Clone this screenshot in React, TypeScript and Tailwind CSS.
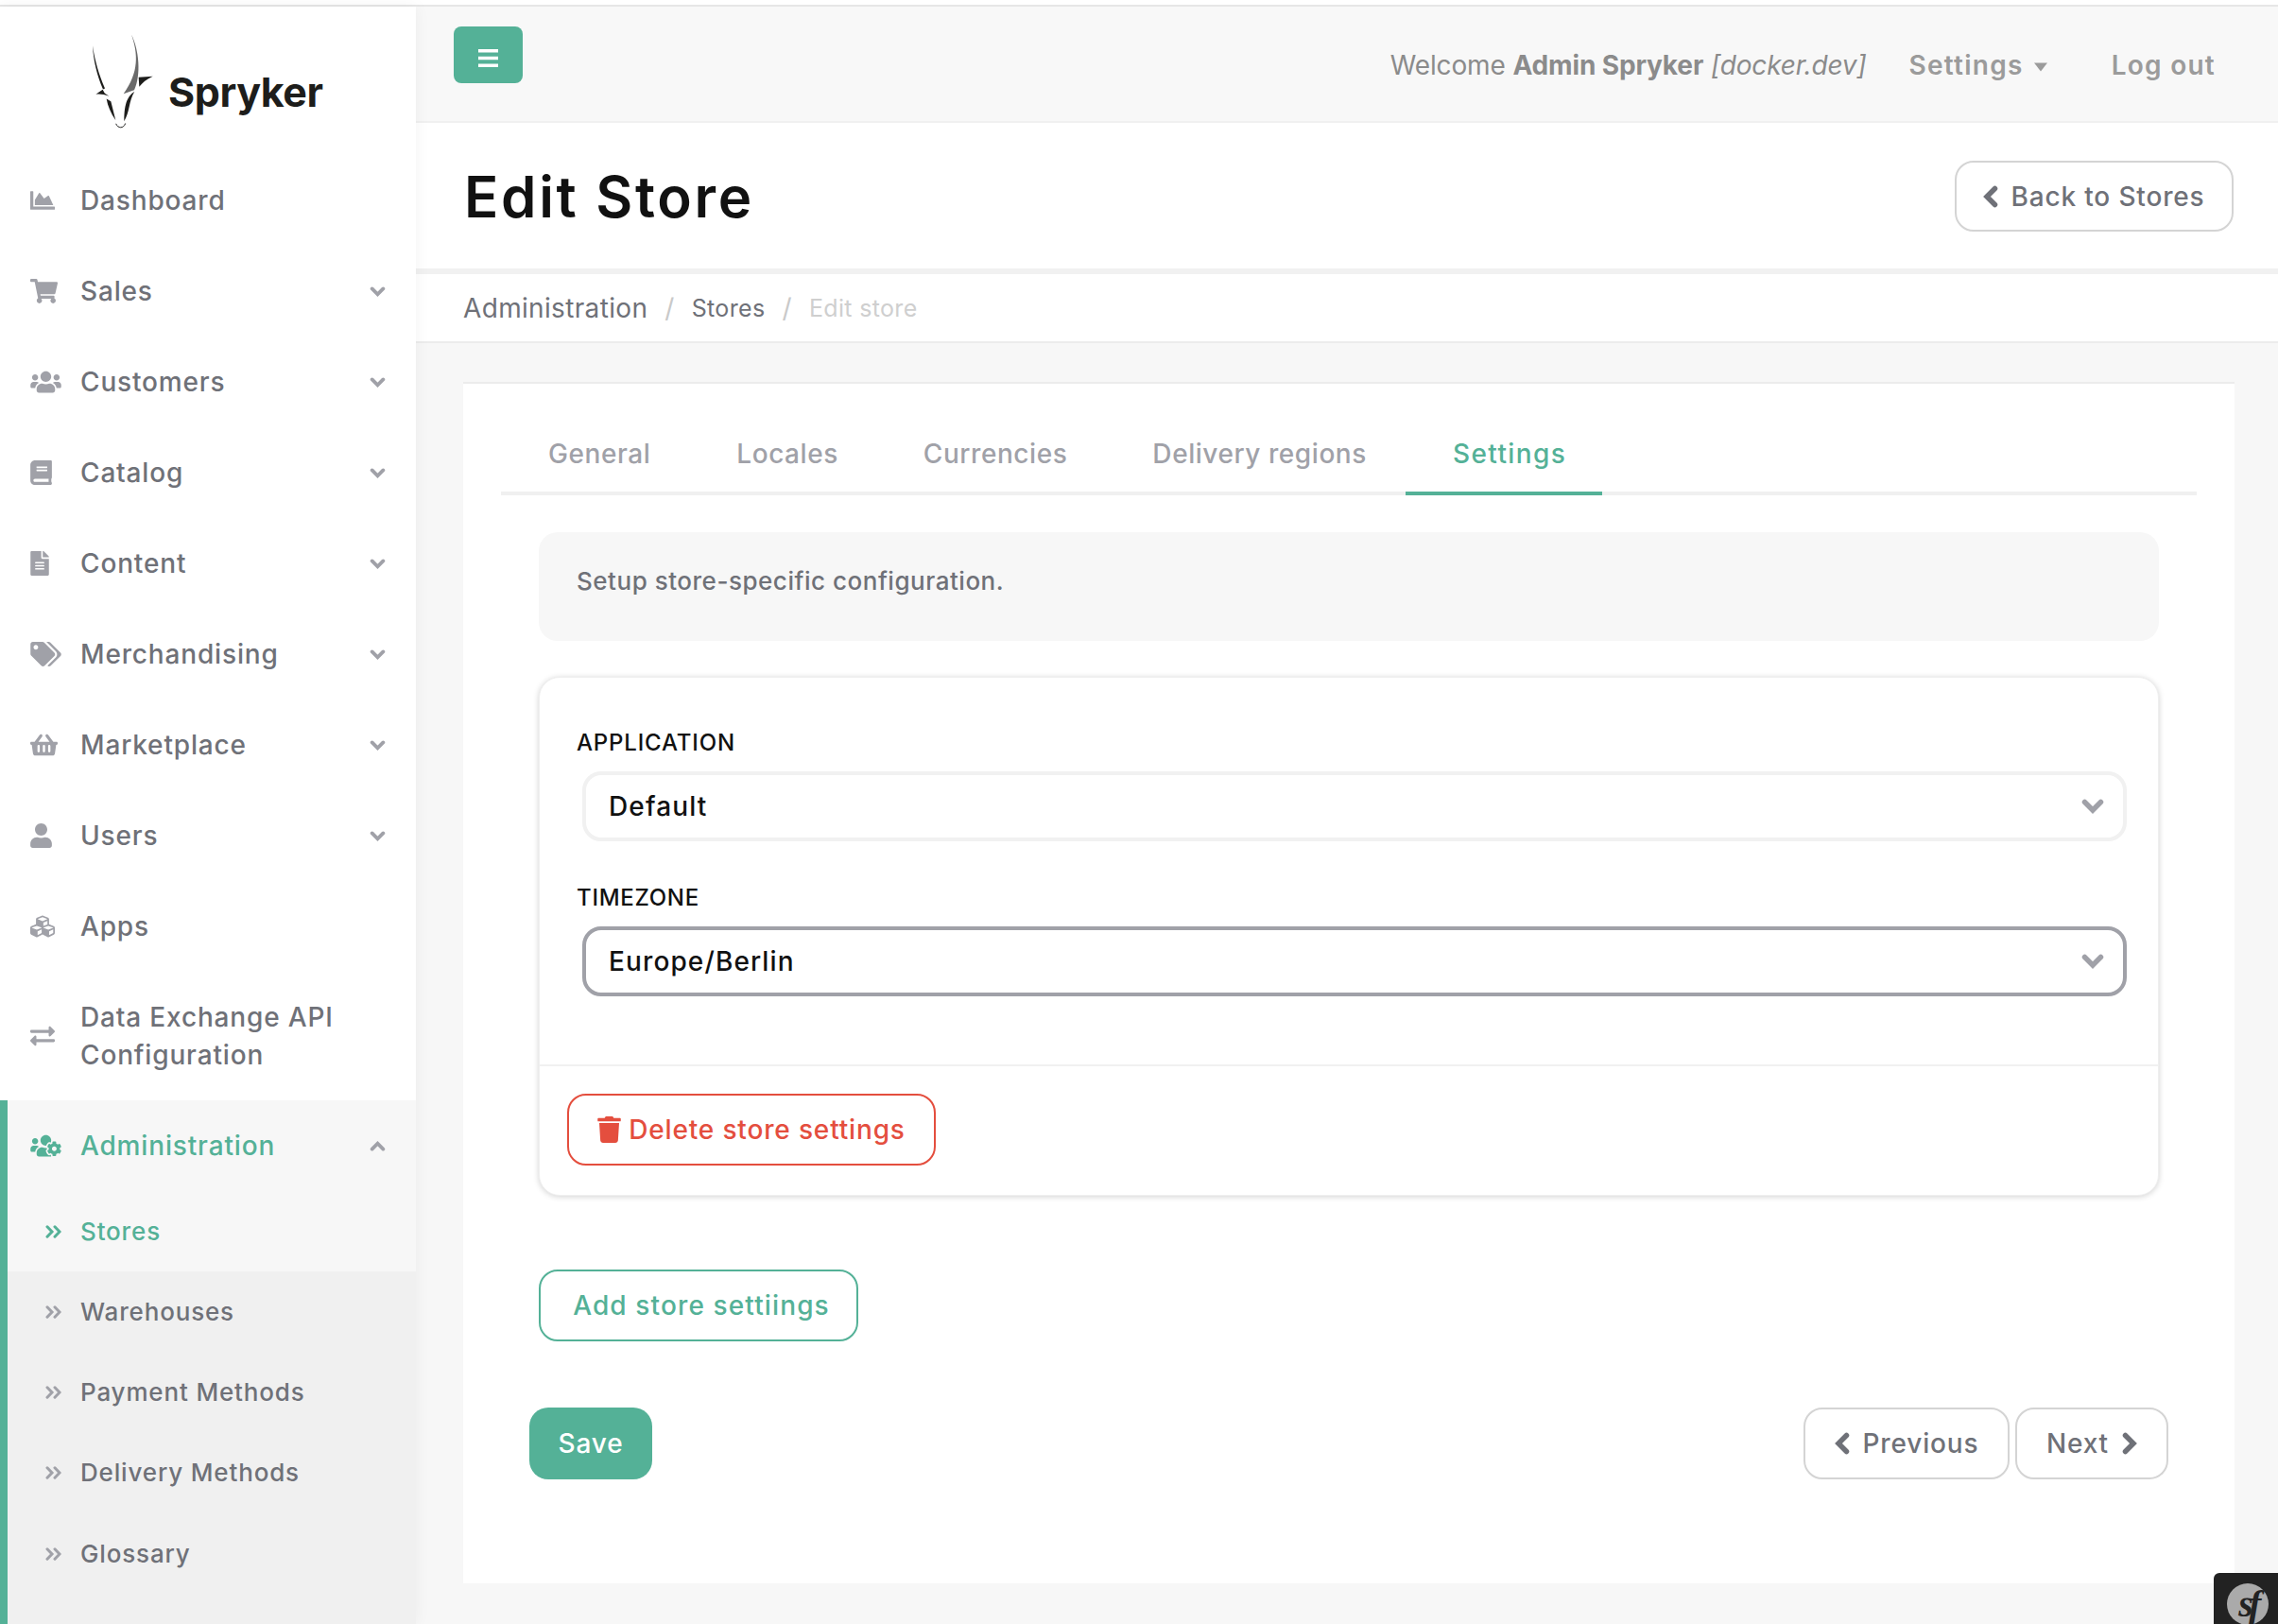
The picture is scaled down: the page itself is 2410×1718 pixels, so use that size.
import React from "react";
import {
  FaChartArea, FaShoppingCart, FaUsers, FaBook, FaFileAlt, FaTags, FaShoppingBasket, FaUser, FaCubes,
  FaExchangeAlt, FaUsersCog, FaTrash,
} from "react-icons/fa";

const items = [
  { label: "Dashboard", Icon: FaChartArea, size: "h-[26px] w-[26px]" },
  { label: "Sales", Icon: FaShoppingCart, size: "h-[26px] w-[29px]", more: true },
  { label: "Customers", Icon: FaUsers, size: "h-[26px] w-[33px]", more: true },
  { label: "Catalog", Icon: FaBook, size: "h-[26px] w-[23px]", more: true },
  { label: "Content", Icon: FaFileAlt, size: "h-[26px] w-[20px]", more: true },
  { label: "Merchandising", Icon: FaTags, size: "h-[26px] w-[33px]", more: true },
  { label: "Marketplace", Icon: FaShoppingBasket, size: "h-[26px] w-[29px]", more: true },
  { label: "Users", Icon: FaUser, size: "h-[26px] w-[23px]", more: true },
  { label: "Apps", Icon: FaCubes, size: "h-[26px] w-[26px]" },
];
const subs = ["Warehouses", "Payment Methods", "Delivery Methods", "Glossary"];

function Logo() {
  return (
    <svg width="70" height="107" viewBox="105 40 210 320" className="shrink-0">
      <path d="M114 85 C120 130 135 180 153 221 L147 224 C128 180 116 130 114 85Z" fill="#1d1d1b" />
      <path d="M237 50 C258 110 262 170 212 238 L246 226 C268 180 262 100 237 50Z" fill="#6a6a6a" />
      <path d="M260 186 L305 183 C285 192 272 203 262 216Z" fill="#1d1d1b" />
      <path d="M124 240 L146 225 L152 236 L166 246 C150 240 136 238 124 240Z" fill="#1d1d1b" />
      <path d="M158 254 L172 262 L187 322 C172 300 162 278 158 254Z" fill="#1d1d1b" />
      <path d="M247 231 C228 245 214 262 214 325 C232 298 228 262 247 231Z" fill="#1d1d1b" />
      <path d="M188 333 C194 348 212 350 218 332" fill="none" stroke="#1d1d1b" strokeWidth="3" />
    </svg>
  );
}

function ChevronDown({ className }: { className?: string }) {
  return (
    <svg viewBox="0 0 24 16" className={className} fill="none" stroke="currentColor" strokeWidth="5.5" strokeLinecap="round" strokeLinejoin="miter">
      <polyline points="3.5,3.5 12,12 20.5,3.5" />
    </svg>
  );
}
function ChevronUp({ className }: { className?: string }) {
  return (
    <svg viewBox="0 0 24 16" className={className} fill="none" stroke="currentColor" strokeWidth="5.5" strokeLinecap="round" strokeLinejoin="miter">
      <polyline points="3.5,12.5 12,4 20.5,12.5" />
    </svg>
  );
}
function ChevronLeft({ className }: { className?: string }) {
  return (
    <svg viewBox="0 0 16 24" className={className} fill="none" stroke="currentColor" strokeWidth="5.5" strokeLinecap="round" strokeLinejoin="miter">
      <polyline points="12.5,3.5 4,12 12.5,20.5" />
    </svg>
  );
}
function ChevronRight({ className }: { className?: string }) {
  return (
    <svg viewBox="0 0 16 24" className={className} fill="none" stroke="currentColor" strokeWidth="5.5" strokeLinecap="round" strokeLinejoin="miter">
      <polyline points="3.5,3.5 12,12 3.5,20.5" />
    </svg>
  );
}
function DoubleRight({ className }: { className?: string }) {
  return (
    <svg viewBox="0 0 17 14" className={className} fill="none" stroke="currentColor" strokeWidth="3" strokeLinecap="round">
      <polyline points="2,1.8 7,7 2,12.2" />
      <polyline points="10,1.8 15,7 10,12.2" />
    </svg>
  );
}

function NavRow({ label, Icon, size, more }: { label: string; Icon: React.ComponentType<{ className?: string }>; size: string; more?: boolean }) {
  return (
    <div className="flex h-[96px] items-center pl-[32px] pr-[32px] text-[#6f7178]">
      <span className="flex w-[53px] shrink-0 items-center text-[#a0a1a8]">
        <Icon className={size} />
      </span>
      <span>{label}</span>
      {more && <ChevronDown className="ml-auto h-[11px] w-[17px] text-[#a0a1a8]" />}
    </div>
  );
}

function SelectBox({ value, active }: { value: string; active?: boolean }) {
  return (
    <div className={`ml-[6px] flex h-[74px] w-[1634px] items-center rounded-[20px] border-4 pl-[24px] pr-[20px] tracking-[0.04em] text-[#111111] ${active ? "border-[#a0a1a8]" : "border-[#f1f1f1]"}`}>
      <span>{value}</span>
      <ChevronDown className="ml-auto h-[16px] w-[24px] text-[#a0a1a8]" />
    </div>
  );
}

export default function App() {
  return (
    <div className="flex h-[1718px] w-[2410px] flex-col overflow-hidden bg-white font-['Inter',sans-serif] text-[28px] font-medium leading-[40px] tracking-[0.03em]">
      <div className="h-[5px] shrink-0 bg-white" />
      <div className="h-[2px] shrink-0 bg-[#e6e6e6]" />
      <div className="relative flex min-h-0 flex-1">
        {/* Sidebar */}
        <aside className="relative z-10 flex w-[440px] shrink-0 flex-col bg-white shadow-[0_0_16px_rgba(0,0,0,0.05)]">
          <div className="flex h-[157px] shrink-0 items-start gap-[13px] pl-[95px] pt-[26px]">
            <Logo />
            <span className="mt-[36px] text-[43px] font-bold leading-[56px] tracking-[-0.01em] text-[#1d1d1b]">Spryker</span>
          </div>
          {items.map((it) => (
            <NavRow key={it.label} {...it} />
          ))}
          <div className="flex h-[136px] items-center pl-[32px] pr-[32px] text-[#6f7178]">
            <span className="flex w-[53px] shrink-0 items-center text-[#a0a1a8]">
              <FaExchangeAlt className="h-[26px] w-[26px]" />
            </span>
            <span>
              Data Exchange API
              <br />
              Configuration
            </span>
          </div>
          <div className="flex flex-1 flex-col border-l-8 border-[#54b197] bg-[#f0f0f0]">
            <div className="bg-[#f7f7f7]">
              <div className="flex h-[96px] items-center pl-[24px] pr-[32px] text-[#54b197]">
                <span className="flex w-[53px] shrink-0 items-center">
                  <FaUsersCog className="h-[26px] w-[33px]" />
                </span>
                <span>Administration</span>
                <ChevronUp className="ml-auto h-[11px] w-[17px] text-[#a0a1a8]" />
              </div>
              <div className="flex h-[85px] items-center pl-[40px] text-[26px] text-[#54b197]">
                <DoubleRight className="mr-[20px] h-[14px] w-[17px] shrink-0" />
                <span>Stores</span>
              </div>
            </div>
            {subs.map((s) => (
              <div key={s} className="flex h-[85.4px] items-center pl-[40px] text-[26px] text-[#6f7178]">
                <DoubleRight className="mr-[20px] h-[14px] w-[17px] shrink-0 text-[#a0a1a8]" />
                <span>{s}</span>
              </div>
            ))}
          </div>
        </aside>

        {/* Main */}
        <main className="flex min-w-0 flex-1 flex-col bg-[#f7f7f7]">
          <header className="flex h-[123px] shrink-0 items-start border-b-2 border-[#f0f0f0] bg-[#f8f8f8] pl-[40px] pr-[66px]">
            <button className="mt-[21px] flex h-[60px] w-[73px] items-center justify-center rounded-[8px] bg-[#54b197] pt-[6px] text-white">
              <svg viewBox="0 0 21 19" className="h-[19px] w-[21px]" fill="currentColor">
                <rect x="0" y="0" width="21" height="3.5" />
                <rect x="0" y="7.75" width="21" height="3.5" />
                <rect x="0" y="15.5" width="21" height="3.5" />
              </svg>
            </button>
            <div className="ml-auto mt-[42px] flex items-center text-[#8b8b8b]">
              <span className="font-normal tracking-[-0.005em]">
                Welcome <b className="font-bold">Admin Spryker</b> <i>[docker.dev]</i>
              </span>
              <span className="ml-[45px] flex items-center font-semibold tracking-[0.045em] text-[#9b9b9b]">
                Settings
                <svg viewBox="0 0 16 10" className="ml-[10px] mt-[3px] h-[10px] w-[16px]" fill="currentColor">
                  <path d="M1 0.5 H15 L8 9.5 Z" />
                </svg>
              </span>
              <span className="ml-[67px] font-semibold tracking-[0.045em] text-[#9b9b9b]">Log out</span>
            </div>
          </header>
          <div className="flex h-[154px] shrink-0 items-center justify-between bg-white pl-[51px] pr-[47px]">
            <h1 className="mt-[2px] text-[60px] font-semibold leading-[70px] tracking-[0.045em] text-[#111111]">Edit Store</h1>
            <button className="flex h-[75px] w-[295px] items-center justify-center gap-[13px] rounded-[20px] border-2 border-[#d4d4d4] bg-white pt-[1px] text-[#6f7178]">
              <ChevronLeft className="h-[24px] w-[16px]" />
              <span>Back to Stores</span>
            </button>
          </div>
          <div className="h-[6px] shrink-0 bg-[#f1f1f1]" />
          <nav className="flex h-[73px] shrink-0 items-center border-b-2 border-[#ececec] bg-white pl-[50px] font-normal tracking-[0.012em] text-[#6f7178]">
            <span>Administration</span>
            <span className="mx-[18px] text-[#c9c9c9]">/</span>
            <span className="text-[25px]">Stores</span>
            <span className="mx-[18px] text-[#c9c9c9]">/</span>
            <span className="text-[25px] text-[#cfcfcf]">Edit store</span>
          </nav>

          <section className="ml-[50px] mr-[46px] mt-[41px] h-[1271px] shrink-0 border-t-2 border-[#ececec] bg-white px-[40px]">
            <div className="flex h-[118px] items-stretch border-b-4 border-[#f0f0f0] tracking-[0.02em] text-[#a0a1a8]">
              <div className="flex items-end pb-[20px] pl-[50px] pr-[40px]">General</div>
              <div className="flex items-end pb-[20px] pl-[51px] pr-[40px]">Locales</div>
              <div className="flex items-end pb-[20px] pl-[50px] pr-[40px]">Currencies</div>
              <div className="flex items-end pb-[20px] pl-[50px] pr-[40px]">Delivery regions</div>
              <div className="-mb-[4px] ml-[1px] flex items-end border-b-4 border-[#54b197] pb-[20px] pl-[50px] pr-[38px] tracking-[0.05em] text-[#54b197]">Settings</div>
            </div>

            <div className="mx-[40px]">
              <div className="mt-[39px] flex h-[115px] items-start rounded-[20px] bg-[#f7f7f7] pl-[40px] pt-[32px] text-[26px] tracking-[0.02em] text-[#6f7178]">
                Setup store-specific configuration.
              </div>

              <div className="mt-[38px] h-[549px] rounded-[22px] border border-[#efefef] bg-white shadow-[0_1px_6px_rgba(0,0,0,0.18)]">
                <div className="h-[409px] pl-[39px] pt-[54px]">
                  <div className="text-[24px] leading-[30px] tracking-[0.035em] text-[#111111]">APPLICATION</div>
                  <div className="mt-[15px]">
                    <SelectBox value="Default" />
                  </div>
                  <div className="mt-[45px] text-[24px] leading-[30px] tracking-[0.03em] text-[#111111]">TIMEZONE</div>
                  <div className="mt-[15px]">
                    <SelectBox value="Europe/Berlin" active />
                  </div>
                </div>
                <div className="border-t-2 border-[#f1f1f1] pl-[29px] pt-[29px]">
                  <button className="flex h-[76px] w-[390px] items-center justify-center gap-[8px] rounded-[20px] border-2 border-[#e44e3e] bg-white text-[#e44e3e]">
                    <FaTrash className="h-[28px] w-[25px]" />
                    <span>Delete store settings</span>
                  </button>
                </div>
              </div>

              <button className="mt-[78px] flex h-[76px] w-[338px] items-center justify-center rounded-[20px] border-2 border-[#54b197] bg-white pl-[6px] tracking-[0.04em] text-[#54b197]">
                Add store settiings
              </button>

              <div className="-mx-[10px] mt-[70px] flex items-center">
                <button className="flex h-[76px] w-[130px] items-center justify-center rounded-[20px] bg-[#54b197] text-white">Save</button>
                <button className="ml-auto flex h-[76px] w-[218px] items-center justify-center gap-[14px] rounded-[20px] border-2 border-[#d4d4d4] bg-white text-[#6f7178]">
                  <ChevronLeft className="h-[24px] w-[16px]" />
                  <span>Previous</span>
                </button>
                <button className="ml-[6px] flex h-[76px] w-[162px] items-center justify-center gap-[14px] rounded-[20px] border-2 border-[#d4d4d4] bg-white text-[#6f7178]">
                  <span>Next</span>
                  <ChevronRight className="h-[24px] w-[16px]" />
                </button>
              </div>
            </div>
          </section>
        </main>

        {/* Symfony debug toolbar toggle */}
        <div className="absolute bottom-0 right-0 z-20 flex h-[54px] w-[68px] items-start rounded-tl-[6px] bg-[#222222] pl-[14px] pt-[11px]">
          <div className="flex h-[44px] w-[44px] items-center justify-center rounded-full bg-[#aaaaaa] font-['Liberation_Serif',serif] text-[40px] font-bold italic leading-none tracking-[-0.12em] text-[#222222]">
            sf
          </div>
        </div>
      </div>
    </div>
  );
}
